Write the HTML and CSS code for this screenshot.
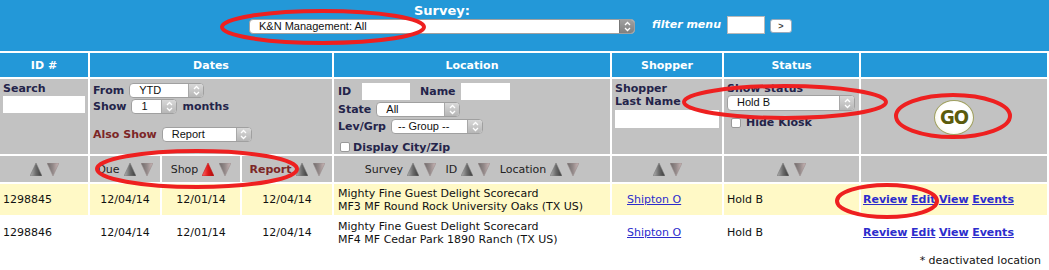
FILE: index.html
```html
<!DOCTYPE html>
<html lang="en">
<head>
    <meta charset="UTF-8">
    <title>Assignments</title>
    <link rel="stylesheet" href="styles.css">
</head>
<body>
    <svg class="defs" width="0" height="0">
        <defs>
            <linearGradient id="gUp" x1="0" y1="0" x2="1" y2="0">
                <stop offset="0" stop-color="#b4b4b4"/>
                <stop offset="0.5" stop-color="#6a6a6a"/>
                <stop offset="1" stop-color="#3a3a3a"/>
            </linearGradient>
            <linearGradient id="gUpRed" x1="0" y1="0" x2="1" y2="0">
                <stop offset="0" stop-color="#ff6a6a"/>
                <stop offset="0.5" stop-color="#e01a1a"/>
                <stop offset="1" stop-color="#a80c0c"/>
            </linearGradient>
            <linearGradient id="gDown" x1="0" y1="0" x2="1" y2="0">
                <stop offset="0" stop-color="#6e6a6a"/>
                <stop offset="0.5" stop-color="#948a8a"/>
                <stop offset="1" stop-color="#cdb8b8"/>
            </linearGradient>
        </defs>
    </svg>

    <div class="topbar">
        <div class="survey-group">
            <div class="survey-label">Survey:</div>
            <span class="sel sel-survey dark"><select><option>K&amp;N Management: All</option></select><span class="sel-btn"><svg width="7" height="11" viewBox="0 0 7 11"><path d="M1 4 3.5 1.5 6 4M1 7 3.5 9.5 6 7"/></svg></span></span>
        </div>
        <span class="filter-label">filter menu</span>
        <input class="filter-input" type="text">
        <button class="filter-btn">&gt;</button>
    </div>

    <table class="grid">
        <colgroup>
            <col class="c-id"><col class="c-due"><col class="c-shop"><col class="c-report">
            <col class="c-loc"><col class="c-shopper"><col class="c-status"><col class="c-act">
        </colgroup>
        <tr class="head">
            <th>ID #</th>
            <th colspan="3">Dates</th>
            <th>Location</th>
            <th>Shopper</th>
            <th>Status</th>
            <th></th>
        </tr>
        <tr class="filters">
            <td>
                <div class="lbl">Search</div>
                <input class="inp inp-search" type="text">
            </td>
            <td colspan="3">
                <div class="line l1"><span class="lbl">From</span><span class="sel sel-from"><select><option>YTD</option></select><span class="sel-btn"><svg width="7" height="11" viewBox="0 0 7 11"><path d="M1 4 3.5 1.5 6 4M1 7 3.5 9.5 6 7"/></svg></span></span></div>
                <div class="line l2"><span class="lbl">Show</span><span class="sel sel-show"><select><option>1</option></select><span class="sel-btn"><svg width="7" height="11" viewBox="0 0 7 11"><path d="M1 4 3.5 1.5 6 4M1 7 3.5 9.5 6 7"/></svg></span></span><span class="lbl months">months</span></div>
                <div class="line l3"><span class="lbl red">Also Show</span><span class="sel sel-also"><select><option>Report</option></select><span class="sel-btn"><svg width="7" height="11" viewBox="0 0 7 11"><path d="M1 4 3.5 1.5 6 4M1 7 3.5 9.5 6 7"/></svg></span></span></div>
            </td>
            <td class="loc-filter">
                <div class="line la"><span class="lbl lbl-id">ID</span><input class="inp inp-id" type="text"><span class="lbl lbl-name">Name</span><input class="inp inp-name" type="text"></div>
                <div class="line lb"><span class="lbl">State</span><span class="sel sel-state"><select><option>All</option></select><span class="sel-btn"><svg width="7" height="11" viewBox="0 0 7 11"><path d="M1 4 3.5 1.5 6 4M1 7 3.5 9.5 6 7"/></svg></span></span></div>
                <div class="line lc"><span class="lbl">Lev/Grp</span><span class="sel sel-group"><select><option>-- Group --</option></select><span class="sel-btn"><svg width="7" height="11" viewBox="0 0 7 11"><path d="M1 4 3.5 1.5 6 4M1 7 3.5 9.5 6 7"/></svg></span></span></div>
                <div class="line ld"><span class="chk"></span><span class="lbl">Display City/Zip</span></div>
            </td>
            <td>
                <div class="lbl">Shopper</div>
                <div class="lbl">Last Name</div>
                <input class="inp inp-last" type="text">
            </td>
            <td>
                <div class="lbl">Show status</div>
                <span class="sel sel-status"><select><option>Hold B</option></select><span class="sel-btn"><svg width="7" height="11" viewBox="0 0 7 11"><path d="M1 4 3.5 1.5 6 4M1 7 3.5 9.5 6 7"/></svg></span></span>
                <div class="line kiosk"><span class="chk"></span><span class="lbl">Hide Kiosk</span></div>
            </td>
            <td class="go-cell"><span class="go">GO</span></td>
        </tr>
        <tr class="sorts">
            <td><span class="arrows"><svg class="up" width="12" height="13" viewBox="0 0 12 13"><path d="M6 0 12 13H0Z"/></svg><svg class="down" width="12" height="13" viewBox="0 0 12 13"><path d="M0 0H12L6 13Z"/></svg></span></td>
            <td><span class="sort-lbl">Due</span><span class="arrows"><svg class="up" width="12" height="13" viewBox="0 0 12 13"><path d="M6 0 12 13H0Z"/></svg><svg class="down" width="12" height="13" viewBox="0 0 12 13"><path d="M0 0H12L6 13Z"/></svg></span></td>
            <td><span class="sort-lbl">Shop</span><span class="arrows"><svg class="up active" width="12" height="13" viewBox="0 0 12 13"><path d="M6 0 12 13H0Z"/></svg><svg class="down" width="12" height="13" viewBox="0 0 12 13"><path d="M0 0H12L6 13Z"/></svg></span></td>
            <td><span class="sort-lbl red">Report</span><span class="arrows"><svg class="up" width="12" height="13" viewBox="0 0 12 13"><path d="M6 0 12 13H0Z"/></svg><svg class="down" width="12" height="13" viewBox="0 0 12 13"><path d="M0 0H12L6 13Z"/></svg></span></td>
            <td>
                <span class="sort-lbl">Survey</span><span class="arrows"><svg class="up" width="12" height="13" viewBox="0 0 12 13"><path d="M6 0 12 13H0Z"/></svg><svg class="down" width="12" height="13" viewBox="0 0 12 13"><path d="M0 0H12L6 13Z"/></svg></span>
                <span class="sort-lbl">ID</span><span class="arrows"><svg class="up" width="12" height="13" viewBox="0 0 12 13"><path d="M6 0 12 13H0Z"/></svg><svg class="down" width="12" height="13" viewBox="0 0 12 13"><path d="M0 0H12L6 13Z"/></svg></span>
                <span class="sort-lbl">Location</span><span class="arrows"><svg class="up" width="12" height="13" viewBox="0 0 12 13"><path d="M6 0 12 13H0Z"/></svg><svg class="down" width="12" height="13" viewBox="0 0 12 13"><path d="M0 0H12L6 13Z"/></svg></span>
            </td>
            <td><span class="arrows"><svg class="up" width="12" height="13" viewBox="0 0 12 13"><path d="M6 0 12 13H0Z"/></svg><svg class="down" width="12" height="13" viewBox="0 0 12 13"><path d="M0 0H12L6 13Z"/></svg></span></td>
            <td><span class="arrows"><svg class="up" width="12" height="13" viewBox="0 0 12 13"><path d="M6 0 12 13H0Z"/></svg><svg class="down" width="12" height="13" viewBox="0 0 12 13"><path d="M0 0H12L6 13Z"/></svg></span></td>
            <td></td>
        </tr>
        <tr class="row hilite">
            <td class="id">1298845</td>
            <td class="date">12/04/14</td>
            <td class="date">12/01/14</td>
            <td class="date">12/04/14</td>
            <td class="loc">Mighty Fine Guest Delight Scorecard<br>MF3 MF Round Rock University Oaks (TX US)</td>
            <td class="shopper"><a href="#">Shipton O</a></td>
            <td class="status">Hold B</td>
            <td class="actions"><a href="#">Review</a> <a href="#">Edit</a> <a href="#">View</a> <a href="#">Events</a></td>
        </tr>
        <tr class="row">
            <td class="id">1298846</td>
            <td class="date">12/04/14</td>
            <td class="date">12/01/14</td>
            <td class="date">12/04/14</td>
            <td class="loc">Mighty Fine Guest Delight Scorecard<br>MF4 MF Cedar Park 1890 Ranch (TX US)</td>
            <td class="shopper"><a href="#">Shipton O</a></td>
            <td class="status">Hold B</td>
            <td class="actions"><a href="#">Review</a> <a href="#">Edit</a> <a href="#">View</a> <a href="#">Events</a></td>
        </tr>
    </table>
    <div class="note">* deactivated location</div>

    <!-- red review marks drawn over the screenshot -->
    <svg class="marks" width="1049" height="270" viewBox="0 0 1049 270">
        <ellipse cx="323" cy="27" rx="101" ry="16"/>
        <ellipse cx="785" cy="102" rx="101" ry="16"/>
        <ellipse cx="953" cy="116" rx="57" ry="21"/>
        <ellipse cx="197" cy="169" rx="100" ry="18"/>
        <ellipse cx="887" cy="201" rx="50" ry="16"/>
    </svg>
</body>
</html>
```

FILE: styles.css
```css
* {
    box-sizing: border-box;
}

body {
    margin: 0;
    font-family: "DejaVu Sans", Verdana, sans-serif;
    font-size: 11px;
    color: #111;
    background: #fff;
    position: relative;
    overflow: hidden;
}

.defs {
    position: absolute;
}

/* top survey bar */
.topbar {
    background: #2398d8;
    height: 51px;
    display: flex;
    justify-content: center;
    align-items: flex-end;
    padding: 0 8px 17px 0;
}

.survey-group {
    display: flex;
    flex-direction: column;
    align-items: center;
}

.survey-label {
    color: #fff;
    font-weight: bold;
    font-size: 13px;
    line-height: 16px;
}

.filter-label {
    color: #fff;
    font-weight: bold;
    font-style: italic;
    margin: 0 6px 2px 17px;
    line-height: 14px;
}

.filter-input {
    width: 38px;
    height: 18px;
    border: 1px solid #b8b8b8;
    background: #fff;
    padding: 0;
}

.filter-btn {
    width: 22px;
    height: 14px;
    margin: 0 0 1px 5px;
    padding: 0;
    border: 1px solid #9ab;
    border-radius: 3px;
    background: #fff;
    font: bold 9px "Liberation Sans", Arial, sans-serif;
    color: #444;
    line-height: 10px;
}

/* mac style popup selects */
.sel {
    display: inline-flex;
    height: 15px;
    background: #fff;
    border: 1px solid #a0a0a0;
    border-radius: 4px;
    overflow: hidden;
    vertical-align: top;
}

.sel select {
    -webkit-appearance: none;
    appearance: none;
    flex: 1;
    min-width: 0;
    height: 13px;
    border: 0;
    margin: 0;
    padding: 0 0 0 9px;
    background: transparent;
    font: 11px "Liberation Sans", Arial, sans-serif;
    line-height: 13px;
    color: #111;
    outline: none;
}

.sel-btn {
    width: 15px;
    display: flex;
    align-items: center;
    justify-content: center;
    background: linear-gradient(#d8d8d8, #b6b6b6);
    border-left: 1px solid #a8a8a8;
}

.sel-btn svg path {
    fill: none;
    stroke: #fff;
    stroke-width: 1.3;
}

.sel.dark .sel-btn {
    background: linear-gradient(#a0a0a0, #808080);
    border-left-color: #777;
}

.sel-survey { width: 386px; }
.sel-from { width: 75px; }
.sel-show { width: 46px; }
.sel-also { width: 90px; }
.sel-state { width: 84px; }
.sel-group { width: 92px; }
.sel-group select { padding-left: 6px; }
.sel-status { width: 128px; height: 16px; }

/* grid */
.grid {
    border-collapse: separate;
    border-spacing: 2px;
    table-layout: fixed;
    width: 1051px;
    margin-left: -2px;
}

.c-id { width: 88px; }
.c-due { width: 70px; }
.c-shop { width: 78px; }
.c-report { width: 90px; }
.c-loc { width: 276px; }
.c-shopper { width: 110px; }
.c-status { width: 135px; }
.c-act { width: 186px; }

.grid td,
.grid th {
    padding: 0;
}

.head th {
    background: #2398d8;
    color: #fff;
    font-weight: bold;
    height: 24px;
    text-align: center;
}

.filters td {
    background: #c2c2c2;
    height: 75px;
    vertical-align: top;
    padding: 3px 3px 0;
}

.lbl {
    font-weight: bold;
    color: #24244a;
    line-height: 13px;
}

.lbl.red,
.sort-lbl.red {
    color: #7c2626;
    font-weight: bold;
}

.inp {
    border: 0;
    background: #fff;
    padding: 0;
    display: block;
}

.inp-search {
    width: 82px;
    height: 17px;
    margin-top: 1px;
}

.line {
    display: flex;
    align-items: center;
}

.line .lbl + .sel,
.line .sel + .lbl {
    margin-left: 5px;
}

.l1 { margin-top: 1px; height: 14px; }
.l2 { margin-top: 2px; height: 14px; }
.l3 { margin-top: 14px; height: 15px; }
.months { margin-left: 4px; }

.loc-filter {
    padding-left: 4px !important;
    padding-top: 4px !important;
}

.la { height: 17px; }
.lb { height: 15px; margin-top: 2px; }
.lc { height: 15px; margin-top: 2px; }
.ld { height: 12px; margin-top: 7px; }

.lbl-id { width: 24px; }
.inp-id { width: 48px; height: 17px; }
.lbl-name { margin: 0 5px 0 10px; }
.inp-name { width: 49px; height: 17px; }

.chk {
    width: 10px;
    height: 10px;
    background: #fff;
    border: 1px solid #999;
    border-radius: 2px;
    margin: 0 3px 0 2px;
}

.inp-last {
    width: 104px;
    height: 18px;
    margin-top: 2px;
}

.kiosk {
    margin-top: 5px;
    padding-left: 2px;
}

.kiosk .lbl {
    margin-left: 2px;
}

.go-cell {
    vertical-align: middle !important;
    text-align: center;
    padding: 0 !important;
}

.go {
    display: inline-block;
    width: 40px;
    height: 35px;
    border-radius: 50%;
    border: 1px solid #a0a060;
    background: radial-gradient(circle at 50% 45%, #fff 55%, #f0f0d8);
    color: #5b5b0c;
    font: bold 20px/33px "DejaVu Sans Condensed", "DejaVu Sans", sans-serif;
    letter-spacing: -1px;
    text-align: center;
    margin-top: 2px;
}

/* sort row */
.sorts td {
    background: #c2c2c2;
    height: 26px;
    text-align: center;
    vertical-align: middle;
    white-space: nowrap;
}

.sort-lbl {
    color: #222;
    margin-right: 4px;
    vertical-align: middle;
}

.arrows {
    display: inline-flex;
    gap: 5px;
    vertical-align: middle;
    margin-right: 6px;
}

.arrows:last-child {
    margin-right: 0;
}

.arrows .up path {
    fill: url(#gUp);
    stroke: #7a7a7a;
    stroke-width: 0.6;
}

.arrows .up.active path {
    fill: url(#gUpRed);
    stroke: #c02020;
}

.arrows .down path {
    fill: url(#gDown);
    stroke: #9a8e8e;
    stroke-width: 0.6;
}

/* data rows */
.row td {
    height: 31px;
    vertical-align: middle;
    white-space: nowrap;
}

.row.hilite td {
    background: #fff9c6;
}

.row .id { padding-left: 3px; }
.row .date { text-align: center; }
.row .loc { padding-left: 4px; line-height: 13px; }
.row .shopper { padding-left: 15px; }
.row .status { padding-left: 3px; }
.row .actions { padding-left: 2px; }

.row a {
    color: #2c2ccc;
    text-decoration: underline;
}

.row .actions a {
    font-weight: bold;
}

.note {
    text-align: right;
    padding: 4px 8px 0 0;
}

.marks {
    position: absolute;
    top: 0;
    left: 0;
    pointer-events: none;
}

.marks ellipse {
    fill: none;
    stroke: #ee2020;
    stroke-width: 4;
}
```
